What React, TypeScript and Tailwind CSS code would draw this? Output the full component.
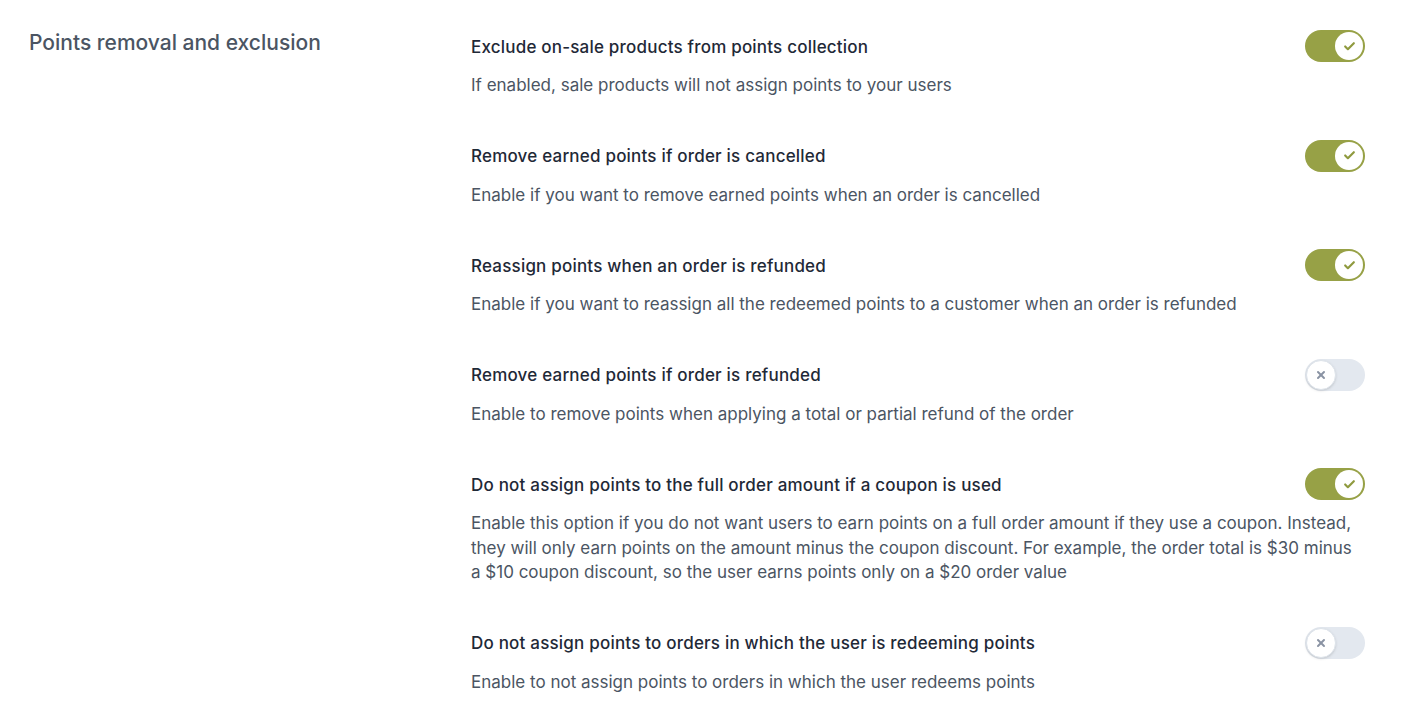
import { Check, X } from 'lucide-react';

interface Option {
  title: string;
  description: string;
  enabled: boolean;
}

const options: Option[] = [
  {
    title: 'Exclude on-sale products from points collection',
    description: 'If enabled, sale products will not assign points to your users',
    enabled: true,
  },
  {
    title: 'Remove earned points if order is cancelled',
    description: 'Enable if you want to remove earned points when an order is cancelled',
    enabled: true,
  },
  {
    title: 'Reassign points when an order is refunded',
    description: 'Enable if you want to reassign all the redeemed points to a customer when an order is refunded',
    enabled: true,
  },
  {
    title: 'Remove earned points if order is refunded',
    description: 'Enable to remove points when applying a total or partial refund of the order',
    enabled: false,
  },
  {
    title: 'Do not assign points to the full order amount if a coupon is used',
    description:
      'Enable this option if you do not want users to earn points on a full order amount if they use a coupon. Instead, they will only earn points on the amount minus the coupon discount. For example, the order total is $30 minus a $10 coupon discount, so the user earns points only on a $20 order value',
    enabled: true,
  },
  {
    title: 'Do not assign points to orders in which the user is redeeming points',
    description: 'Enable to not assign points to orders in which the user redeems points',
    enabled: false,
  },
];

function Toggle({ on }: { on: boolean }) {
  if (on) {
    return (
      <div className="w-[60px] h-[32px] rounded-full bg-[#97a146] flex items-center justify-end pr-[2px] shrink-0">
        <div className="w-[28px] h-[28px] rounded-full bg-white flex items-center justify-center">
          <Check className="w-[13px] h-[13px] text-[#8f9a3e]" strokeWidth={4} />
        </div>
      </div>
    );
  }
  return (
    <div className="w-[60px] h-[32px] rounded-full bg-[#e3e8ef] flex items-center justify-start pl-[1px] shrink-0">
      <div className="w-[30px] h-[30px] rounded-full bg-white border border-[#dde3ea] shadow-sm flex items-center justify-center">
        <X className="w-[12px] h-[12px] text-[#8a93a3]" strokeWidth={4} />
      </div>
    </div>
  );
}

export default function App() {
  return (
    <div
      className="min-h-screen bg-white pl-[29px] pr-[63px] pt-[30px] flex"
      style={{ fontFamily: 'Inter, "Noto Sans", sans-serif' }}
    >
      <div className="w-[442px] shrink-0 pt-[1px]">
        <h2 className="text-[21px] leading-[24px] font-medium text-[#4b5563]">
          Points removal and exclusion
        </h2>
      </div>
      <div className="flex-1 flex flex-col gap-[42px]">
        {options.map((opt) => (
          <div key={opt.title} className="flex flex-col">
            <div className="flex items-center justify-between h-[32px]">
              <span className="pt-[3px] text-[17px] font-medium tracking-[0.2px] text-[#1f2937]">{opt.title}</span>
              <Toggle on={opt.enabled} />
            </div>
            <p className="mt-[11px] text-[17px] leading-[24.5px] text-[#4b5563]">{opt.description}</p>
          </div>
        ))}
      </div>
    </div>
  );
}
